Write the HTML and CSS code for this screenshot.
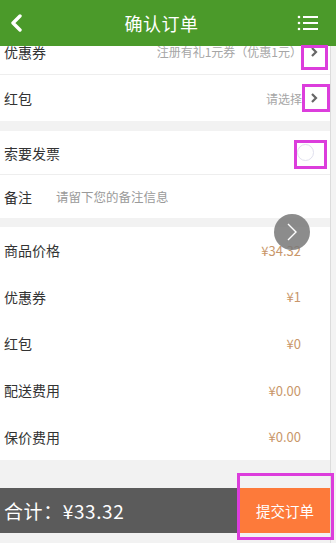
FILE: index.html
```html
<!DOCTYPE html>
<html lang="zh">
<head>
<meta charset="utf-8">
<link rel="stylesheet" href="styles.css">
</head>
<body>
<div class="screen">
  <header class="topbar">
    <div class="tb-side">
      <svg width="14" height="18" viewBox="0 0 14 18"><path d="M11 2 L4 9 L11 16" fill="none" stroke="#fff" stroke-width="3.4" stroke-linecap="round" stroke-linejoin="round"/></svg>
    </div>
    <div class="tb-title">确认订单</div>
    <div class="tb-side tb-right">
      <svg width="22" height="18" viewBox="0 0 22 18"><g fill="#fff"><circle cx="2" cy="3" r="1.3"/><circle cx="2" cy="9" r="1.3"/><circle cx="2" cy="15" r="1.3"/><rect x="6" y="2" width="15" height="2"/><rect x="6" y="8" width="15" height="2"/><rect x="6" y="14" width="15" height="2"/></g></svg>
    </div>
  </header>
  <div class="body-wrap">
    <main class="content">
      <section class="group first">
        <div class="row r46 line">
          <span class="label">优惠券</span>
          <span class="val">注册有礼1元券（优惠1元）</span>
          <span class="chev"><svg width="8" height="12" viewBox="0 0 8 12"><path d="M2 2 L6 6 L2 10" fill="none" stroke="#666" stroke-width="2.2"/></svg></span>
        </div>
        <div class="row r46">
          <span class="label">红包</span>
          <span class="val">请选择</span>
          <span class="chev"><svg width="8" height="12" viewBox="0 0 8 12"><path d="M2 2 L6 6 L2 10" fill="none" stroke="#666" stroke-width="2.2"/></svg></span>
        </div>
      </section>
      <section class="group">
        <div class="row r44 line">
          <span class="label">索要发票</span>
          <span class="toggle"></span>
        </div>
        <div class="row r43">
          <span class="label note-label">备注</span>
          <span class="placeholder">请留下您的备注信息</span>
        </div>
      </section>
      <section class="group prices">
        <div class="row rp"><span class="label">商品价格</span><span class="price">¥34.32</span></div>
        <div class="row rp"><span class="label">优惠券</span><span class="price">¥1</span></div>
        <div class="row rp"><span class="label">红包</span><span class="price">¥0</span></div>
        <div class="row rp"><span class="label">配送费用</span><span class="price">¥0.00</span></div>
        <div class="row rp"><span class="label">保价费用</span><span class="price">¥0.00</span></div>
      </section>
      <div class="spacer"></div>
      <footer class="bottombar">
        <div class="total">合计：¥33.32</div>
        <div class="submit">提交订单</div>
      </footer>
    </main>
    <div class="scrolltrack"></div>
  </div>

  <div class="float-btn">
    <svg width="12" height="20" viewBox="0 0 12 20"><path d="M2 2 L10 10 L2 18" fill="none" stroke="#fff" stroke-width="1.4"/></svg>
  </div>

  <div class="mark m1"></div>
  <div class="mark m2"></div>
  <div class="mark m3"></div>
  <div class="mark m4"></div>
</div>
</body>
</html>
```
FILE: styles.css
```css
* { box-sizing: border-box; }
html, body { margin: 0; padding: 0; }
body {
  width: 336px;
  height: 543px;
  overflow: hidden;
  background: #fff;
  font-family: "Noto Sans CJK SC", "Noto Sans", "Liberation Sans", sans-serif;
  color: #333;
}
.screen { position: relative; width: 336px; height: 543px; overflow: hidden; }

.topbar {
  position: relative;
  z-index: 2;
  height: 46px;
  background: #4b9a2a;
  display: flex;
  align-items: center;
  color: #fff;
}
.tb-side { width: 46px; display: flex; align-items: center; padding-left: 9px; }
.tb-right { justify-content: flex-end; padding-left: 0; padding-right: 17px; width: 60px; }
.tb-title {
  flex: 1;
  text-align: center;
  font-size: 18px;
  padding-left: 1px;
  letter-spacing: 0.5px;
}

.body-wrap { display: flex; height: 497px; }
.content { width: 330px; display: flex; flex-direction: column; background: #f2f2f2; }
.scrolltrack { width: 6px; background: #f3f3f3; border-left: 1px solid #dcdcdc; }

.group { background: #fff; margin-top: 10px; }
.group.first { margin-top: -17px; }
.group.prices { margin-top: 9px; }

.row { display: flex; align-items: center; padding: 0 8px 0 4px; }
.r46 { height: 46px; }
.r44 { height: 44px; }
.r43 { height: 43px; }
.rp { height: 46.6px; }
.line { border-bottom: 1px solid #eeeeee; }

.label { font-size: 14px; color: #333; }
.val { margin-left: auto; font-size: 12px; color: #a6a6a6; }
.chev { width: 20px; display: flex; justify-content: center; padding-left: 3px; }
.toggle {
  margin-left: auto;
  margin-right: 8px;
  width: 17px; height: 17px;
  border-radius: 50%;
  border: 1px solid #e0e0ee;
  background: #fff;
}
.note-label { width: 52px; }
.placeholder { font-size: 12.5px; color: #9a9a9a; }
.price { margin-left: auto; margin-right: 21px; font-size: 13px; color: #c9976a; }

.spacer { height: 28px; }
.bottombar { display: flex; height: 45px; background: #5b5b5b; }
.total { flex: 1; display: flex; align-items: center; padding-left: 4px; color: #fff; font-size: 19px; letter-spacing: 0.6px; }
.submit {
  width: 90px;
  background: #fd7a3a;
  color: #fff;
  font-size: 14.5px;
  display: flex; align-items: center; justify-content: center;
}

.float-btn {
  position: absolute;
  left: 274px; top: 214px;
  width: 36px; height: 36px;
  border-radius: 50%;
  background: rgba(120,120,120,0.85);
  display: flex; align-items: center; justify-content: center;
}

.mark { position: absolute; border: 3px solid #dc3ddc; z-index: 3; }
.m1 { left: 301px; top: 45px; width: 27px; height: 25px; }
.m2 { left: 302px; top: 84px; width: 28px; height: 28px; }
.m3 { left: 294px; top: 140px; width: 33px; height: 29px; }
.m4 { left: 237px; top: 473px; width: 97px; height: 67px; }
```
